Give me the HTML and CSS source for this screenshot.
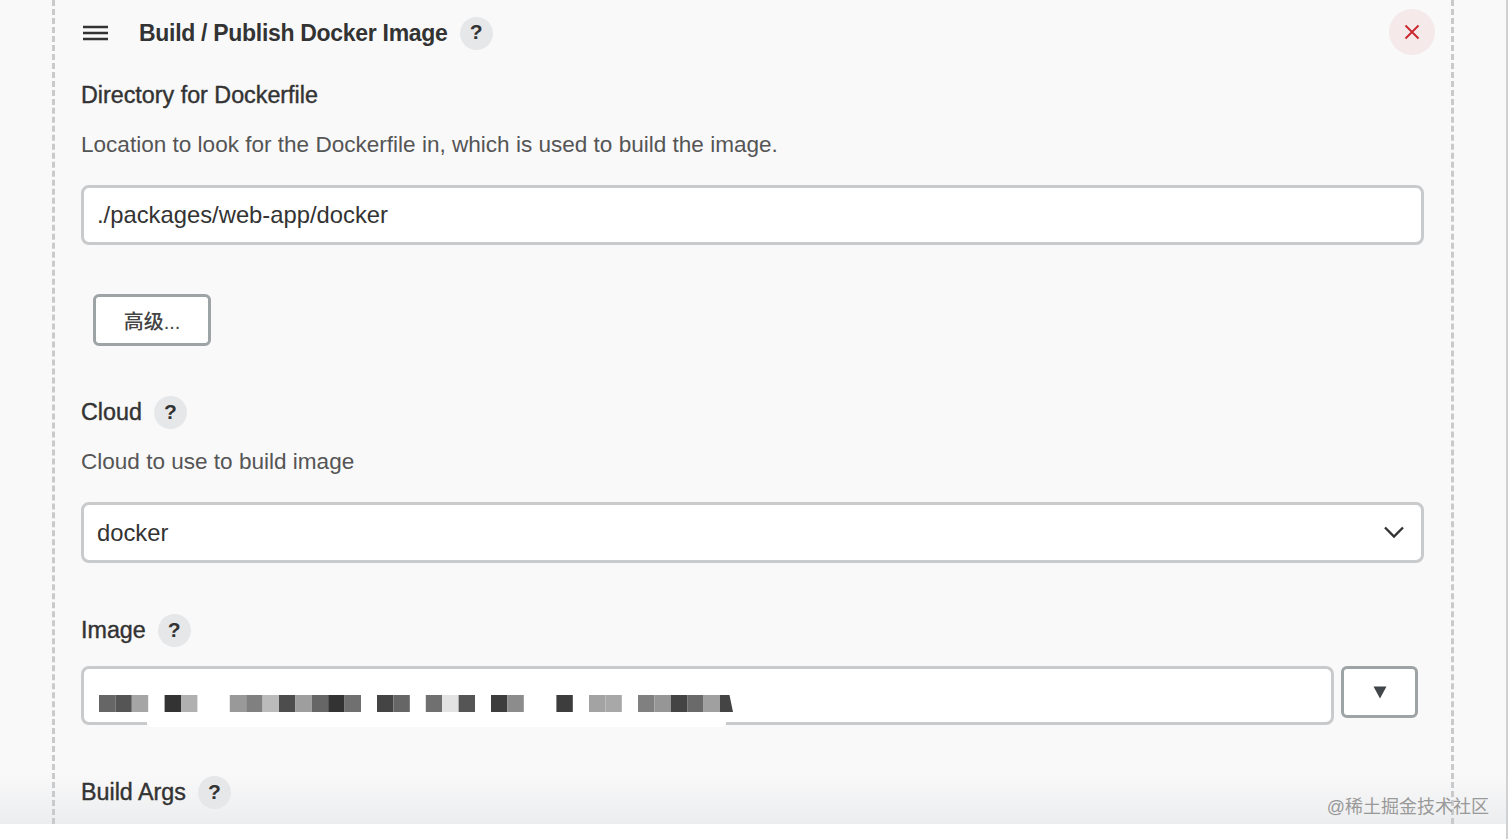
FILE: index.html
```html
<!DOCTYPE html>
<html lang="zh-CN">
<head>
    <meta charset="UTF-8">
    <meta name="viewport" content="width=device-width, initial-scale=1.0">
    <title>Build / Publish Docker Image</title>
    <link rel="stylesheet" href="styles.css">
</head>
<body>
    <div class="page">
        <div class="screen">
            <div class="block">
                <!-- block header -->
                <div class="block-head">
                    <svg class="handle" width="26" height="16" viewBox="0 0 26 16">
                        <path d="M0 2h25M0 8h25M0 14h25" stroke="#333" stroke-width="2.4" fill="none"/>
                    </svg>
                    <span class="block-title">Build / Publish Docker Image</span>
                    <span class="help">?</span>
                    <button class="close" type="button">
                        <svg width="16" height="16" viewBox="0 0 16 16">
                            <path d="M1.5 1.5l13 13M14.5 1.5l-13 13" stroke="#c9252d" stroke-width="1.8" fill="none"/>
                        </svg>
                    </button>
                </div>

                <!-- Directory for Dockerfile -->
                <div class="field-label field-dir">Directory for Dockerfile</div>
                <div class="field-desc">Location to look for the Dockerfile in, which is used to build the image.</div>
                <input class="text-input" type="text" value="./packages/web-app/docker">

                <button class="btn-advanced" type="button">高级...</button>

                <!-- Cloud -->
                <div class="field-label field-cloud">Cloud <span class="help">?</span></div>
                <div class="field-desc field-desc-cloud">Cloud to use to build image</div>
                <div class="select-wrap">
                    <select class="select-input">
                        <option>docker</option>
                    </select>
                    <svg class="chevron" width="22" height="14" viewBox="0 0 22 14">
                        <path d="M2 2.5l9 9 9-9" stroke="#333" stroke-width="2.4" fill="none"/>
                    </svg>
                </div>

                <!-- Image -->
                <div class="field-label field-image">Image <span class="help">?</span></div>
                <div class="image-row">
                    <div class="image-input">
                        <!-- 打码的镜像地址 -->
                        <svg class="mosaic" width="636" height="24" viewBox="0 0 636 24">
                            <g transform="translate(0 5)">
                                <rect x="0" width="16.4" height="17" fill="#666"/>
                                <rect x="16.4" width="16.4" height="17" fill="#555"/>
                                <rect x="32.8" width="16.4" height="17" fill="#a5a5a5"/>
                                <rect x="65.6" width="16.4" height="17" fill="#333"/>
                                <rect x="82" width="16.4" height="17" fill="#b0b0b0"/>
                                <rect x="130.8" width="16.4" height="17" fill="#999"/>
                                <rect x="147.2" width="16.4" height="17" fill="#808080"/>
                                <rect x="163.6" width="16.4" height="17" fill="#bbb"/>
                                <rect x="180" width="16.4" height="17" fill="#4d4d4d"/>
                                <rect x="196.4" width="16.4" height="17" fill="#9e9e9e"/>
                                <rect x="212.8" width="16.4" height="17" fill="#666"/>
                                <rect x="229.2" width="16.4" height="17" fill="#333"/>
                                <rect x="245.6" width="16.4" height="17" fill="#707070"/>
                                <rect x="278" width="16.4" height="17" fill="#444"/>
                                <rect x="294.4" width="16.4" height="17" fill="#666"/>
                                <rect x="326.8" width="16.4" height="17" fill="#707070"/>
                                <rect x="343.2" width="16.4" height="17" fill="#e3e3e3"/>
                                <rect x="359.6" width="16.4" height="17" fill="#555"/>
                                <rect x="392" width="16.4" height="17" fill="#3d3d3d"/>
                                <rect x="408.4" width="16.4" height="17" fill="#8c8c8c"/>
                                <rect x="457.4" width="16.4" height="17" fill="#3d3d3d"/>
                                <rect x="490" width="16.4" height="17" fill="#a3a3a3"/>
                                <rect x="506.4" width="16.4" height="17" fill="#a8a8a8"/>
                                <rect x="539" width="16.4" height="17" fill="#808080"/>
                                <rect x="555.4" width="16.4" height="17" fill="#969696"/>
                                <rect x="571.8" width="16.4" height="17" fill="#444"/>
                                <rect x="588.2" width="16.4" height="17" fill="#6a6a6a"/>
                                <rect x="604.6" width="16.4" height="17" fill="#a0a0a0"/>
                                <path d="M621 0h9.5l3.5 17h-13z" fill="#444"/>
                            </g>
                        </svg>
                    </div>
                    <button class="btn-drop" type="button">
                        <svg width="14" height="13" viewBox="0 0 14 13">
                            <path d="M0.5 0.5h13L7 12.5z" fill="#41464b"/>
                        </svg>
                    </button>
                </div>

                <!-- Build Args -->
                <div class="field-label field-args">Build Args <span class="help">?</span></div>
            </div>
            <div class="fade"></div>
            <div class="watermark">@稀土掘金技术社区</div>
        </div>
    </div>
</body>
</html>
```
FILE: styles.css
```css
* {
    margin: 0;
    padding: 0;
    box-sizing: border-box;
}

body {
    font-family: "Liberation Sans", "Noto Sans CJK SC", sans-serif;
    background: #fff;
    overflow: hidden;
}

.page {
    width: 1508px;
    height: 839px;
    border-right: 2px solid #cfd1d2;
}

.screen {
    position: relative;
    height: 824px;
    padding-left: 52px;
    background: #f9f9fa;
    overflow: hidden;
}

.block {
    position: relative;
    z-index: 1;
    width: 1402px;
    height: 824px;
    padding: 0 27px 0 26px;
    border-left: 3px dashed #c8cacc;
    border-right: 3px dashed #c8cacc;
}

/* header */
.block-head {
    display: flex;
    align-items: center;
    height: 66px;
    padding-left: 2px;
}

.handle {
    margin-right: 30px;
}

.block-title {
    margin-top: 1px;
    font-size: 23px;
    font-weight: 700;
    color: #333;
    letter-spacing: -0.3px;
}

.help {
    display: inline-flex;
    justify-content: center;
    align-items: center;
    width: 33px;
    height: 33px;
    margin-left: 12px;
    padding-bottom: 2px;
    border-radius: 50%;
    background: #e6e7e8;
    color: #333;
    font-size: 21px;
    font-weight: 700;
    -webkit-text-stroke: 0;
}

.close {
    width: 46px;
    height: 46px;
    margin-left: auto;
    margin-right: -11px;
    margin-top: -2px;
    display: flex;
    justify-content: center;
    align-items: center;
    border: none;
    border-radius: 50%;
    background: #f5e9e9;
}

/* fields */
.field-label {
    display: flex;
    align-items: center;
    font-size: 23.3px;
    color: #333;
    -webkit-text-stroke: 0.4px #333;
}

.field-dir {
    height: 30px;
    margin-top: 14px;
}

.field-cloud {
    height: 33px;
    margin-top: 50px;
}

.field-image {
    height: 33px;
    margin-top: 51px;
}

.field-args {
    height: 33px;
    margin-top: 51px;
}

.field-desc {
    margin-top: 20px;
    font-size: 22.55px;
    line-height: 30px;
    color: #555;
}

.field-desc-cloud {
    margin-top: 18px;
}

.text-input,
.select-input {
    display: block;
    width: 100%;
    height: 60px;
    padding: 0 13px;
    border: 3px solid #c8cacc;
    border-radius: 8px;
    background: #fff;
    color: #333;
    font-family: inherit;
    font-size: 23.8px;
    outline: none;
}

.text-input {
    margin-top: 25px;
}

.btn-advanced {
    display: block;
    width: 118px;
    height: 52px;
    margin: 49px 0 0 12px;
    border: 3px solid #9ea3a6;
    border-radius: 6px;
    background: #fff;
    color: #444;
    font-family: inherit;
    font-size: 20px;
    font-weight: 500;
}

.select-wrap {
    position: relative;
    margin-top: 25px;
}

.select-input {
    height: 61px;
    appearance: none;
}

.chevron {
    position: absolute;
    top: 23px;
    right: 19px;
}

/* image row */
.image-row {
    display: flex;
    align-items: flex-start;
    margin-top: 19px;
}

.image-input {
    position: relative;
    width: 1253px;
    height: 59px;
    padding: 21px 0 0 15px;
    border: 3px solid #c8cacc;
    border-radius: 8px;
    background: #fff;
}

/* 盖住下边框的白块 */
.image-input::after {
    content: '';
    position: absolute;
    left: 63px;
    bottom: -5px;
    width: 579px;
    height: 8px;
    background: #fff;
    border-radius: 0 0 4px 4px;
}

.mosaic {
    display: block;
}

.btn-drop {
    display: flex;
    justify-content: center;
    align-items: center;
    width: 77px;
    height: 52px;
    margin-left: 7px;
    border: 3px solid #9ea3a6;
    border-radius: 6px;
    background: #fff;
}

/* bottom shading and watermark */
.fade {
    position: absolute;
    left: 0;
    right: 0;
    bottom: 0;
    height: 50px;
    background: linear-gradient(rgba(236, 237, 238, 0), #ecedee);
    pointer-events: none;
}

.watermark {
    position: absolute;
    z-index: 2;
    right: 17px;
    bottom: 6px;
    font-size: 18px;
    line-height: 22px;
    color: #999;
}
```
